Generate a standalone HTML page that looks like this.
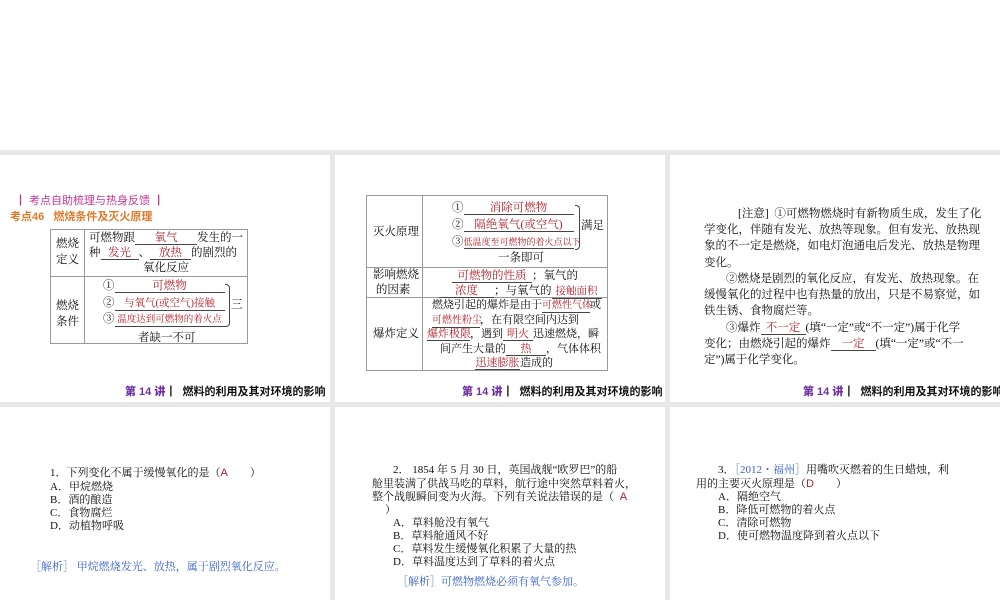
<!DOCTYPE html>
<html><head><meta charset="utf-8">
<style>
*{margin:0;padding:0;box-sizing:border-box}
body{width:1000px;height:600px;background:#e8e8e8;position:relative;overflow:hidden;font-family:"Liberation Serif","Noto Serif CJK SC",serif;color:#111}
.p{position:absolute;background:#fff;overflow:hidden}
.t{position:absolute;white-space:nowrap;font-size:11.5px;line-height:14px}
.r{color:#b0222a}
.u{display:inline-block;border-bottom:1px solid #444;text-align:center;line-height:12px}
.s{font-family:"Liberation Sans","Noto Sans CJK SC",sans-serif}
.foot{position:absolute;font-size:11px;white-space:nowrap;font-family:"Liberation Sans","Noto Sans CJK SC",sans-serif;font-weight:bold}
.foot b{color:#7030a0}
.bl{position:absolute;background:#999}
.blue{color:#3a62c8}
</style></head><body>
<div class="p" style="left:0;top:0;width:1000px;height:150px"></div>

<!-- Panel 1 -->
<div class="p" style="left:0;top:155px;width:330px;height:247px">
 <div class="t s" style="left:15px;top:39px;color:#c0359a;font-size:11px">┃ 考点自助梳理与热身反馈 ┃</div>
 <div class="t s" style="left:10px;top:55px;color:#e07a2a;font-size:11px;font-weight:bold">考点46 &nbsp; 燃烧条件及灭火原理</div>
 <div style="position:absolute;left:50px;top:74px;width:198px;height:115px;border:1px solid #999"></div>
 <div class="bl" style="left:84px;top:74px;width:1px;height:115px"></div>
 <div class="bl" style="left:50px;top:121px;width:198px;height:1px"></div>
 <div class="t" style="left:56px;top:81px;line-height:16px">燃烧<br>定义</div>
 <div class="t" style="left:89px;top:76px">可燃物跟<span class="u r" style="width:62px">氧气</span>发生的一</div>
 <div class="t" style="left:89px;top:91px">种<span class="u r" style="width:38px">发光</span>、<span class="u r" style="width:41px">放热</span>的剧烈的</div>
 <div class="t" style="left:143px;top:106px">氧化反应</div>
 <div class="t" style="left:56px;top:143px;line-height:16px">燃烧<br>条件</div>
 <div class="t" style="left:103px;top:124px">①<span class="u r" style="width:110px">可燃物</span></div>
 <div class="t" style="left:103px;top:141px">②<span class="u r" style="width:110px;font-size:10.5px">与氧气(或空气)接触</span></div>
 <div class="t" style="left:103px;top:157px">③<span class="u r" style="width:110px;font-size:9.5px">温度达到可燃物的着火点</span></div>
 <div style="position:absolute;left:225px;top:129px;width:5px;height:43px;border:1px solid #444;border-left:none;border-radius:0 4px 4px 0"></div>
 <div class="t" style="left:231px;top:143px">三</div>
 <div class="t" style="left:138px;top:176px">者缺一不可</div>
 <div class="foot" style="left:125px;top:228px"><b>第 14 讲</b>┃ &nbsp;燃料的利用及其对环境的影响</div>
</div>

<!-- Panel 2 -->
<div class="p" style="left:335px;top:155px;width:330px;height:247px">
 <div style="position:absolute;left:31px;top:40px;width:242px;height:176px;border:1px solid #999"></div>
 <div class="bl" style="left:87px;top:40px;width:1px;height:176px"></div>
 <div class="bl" style="left:31px;top:112px;width:242px;height:1px"></div>
 <div class="bl" style="left:31px;top:142px;width:242px;height:1px"></div>
 <div class="t" style="left:38px;top:70px">灭火原理</div>
 <div class="t" style="left:117px;top:46px">①<span class="u r" style="width:110px">消除可燃物</span></div>
 <div class="t" style="left:117px;top:63px">②<span class="u r" style="width:110px">隔绝氧气(或空气)</span></div>
 <div class="t" style="left:117px;top:80px">③<span class="u r" style="width:110px;font-size:9px">低温度至可燃物的着火点以下</span></div>
 <div style="position:absolute;left:240px;top:50px;width:5px;height:45px;border:1px solid #444;border-left:none;border-radius:0 4px 4px 0"></div>
 <div class="t" style="left:246px;top:64px">满足</div>
 <div class="t" style="left:163px;top:96px">一条即可</div>
 <div class="t" style="left:38px;top:113px;line-height:15px">影响燃烧<br>&nbsp;的因素</div>
 <div class="t" style="left:117px;top:114px"><span class="u r" style="width:80px">可燃物的性质</span>；氧气的</div>
 <div class="t" style="left:104px;top:129px"><span class="u r" style="width:55px">浓度</span>；与氧气的<span class="u r" style="width:50px;font-size:10.5px">接触面积</span></div>
 <div class="t" style="left:38px;top:172px">爆炸定义</div>
 <div class="t" style="left:97px;top:143px;font-size:11px">燃烧引起的爆炸是由于<span class="u r" style="width:48px;font-size:10px">可燃性气体</span>或</div>
 <div class="t" style="left:97px;top:158px;font-size:11px"><span class="u r" style="width:48px;font-size:10px">可燃性粉尘</span>，在有限空间内达到</div>
 <div class="t" style="left:92px;top:172px;font-size:11px"><span class="u r" style="width:43px">爆炸极限</span>，遇到<span class="u r" style="width:30px">明火</span>迅速燃烧，瞬</div>
 <div class="t" style="left:105px;top:187px;font-size:11px">间产生大量的<span class="u r" style="width:40px">热</span>，气体体积</div>
 <div class="t" style="left:140px;top:201px;font-size:11px"><span class="u r" style="width:45px">迅速膨胀</span>造成的</div>
 <div class="foot" style="left:127px;top:228px"><b>第 14 讲</b>┃ &nbsp;燃料的利用及其对环境的影响</div>
</div>

<!-- Panel 3 -->
<div class="p" style="left:670px;top:155px;width:330px;height:247px">
 <div class="t" style="left:68px;top:52px">[注意] &nbsp;①可燃物燃烧时有新物质生成，发生了化</div>
 <div class="t" style="left:34px;top:68px">学变化，伴随有发光、放热等现象。但有发光、放热现</div>
 <div class="t" style="left:34px;top:84px">象的不一定是燃烧，如电灯泡通电后发光、放热是物理</div>
 <div class="t" style="left:34px;top:101px">变化。</div>
 <div class="t" style="left:56px;top:117px">②燃烧是剧烈的氧化反应，有发光、放热现象。在</div>
 <div class="t" style="left:34px;top:133px">缓慢氧化的过程中也有热量的放出，只是不易察觉，如</div>
 <div class="t" style="left:34px;top:149px">铁生锈、食物腐烂等。</div>
 <div class="t" style="left:56px;top:166px">③爆炸<span class="u r" style="width:45px">不一定</span>(填“一定”或“不一定”)属于化学</div>
 <div class="t" style="left:34px;top:182px">变化；由燃烧引起的爆炸<span class="u r" style="width:45px">一定</span>(填“一定”或“不一</div>
 <div class="t" style="left:34px;top:198px">定”)属于化学变化。</div>
 <div class="foot" style="left:133px;top:228px"><b>第 14 讲</b>┃ &nbsp;燃料的利用及其对环境的影响</div>
</div>

<!-- Row 2 -->
<div class="p" style="left:0;top:407px;width:330px;height:193px">
 <div class="t" style="left:50px;top:59px;font-size:11px">1．下列变化不属于缓慢氧化的是（<span class="r s">A</span>　　）</div>
 <div class="t" style="left:50px;top:73px;font-size:11px">A．甲烷燃烧</div>
 <div class="t" style="left:50px;top:86px;font-size:11px">B．酒的酿造</div>
 <div class="t" style="left:50px;top:99px;font-size:11px">C．食物腐烂</div>
 <div class="t" style="left:50px;top:112px;font-size:11px">D．动植物呼吸</div>
 <div class="t blue" style="left:30px;top:153px;font-size:11px">［解析］ 甲烷燃烧发光、放热，属于剧烈氧化反应。</div>
</div>
<div class="p" style="left:335px;top:407px;width:330px;height:193px">
 <div class="t" style="left:58px;top:56px;font-size:11px">2． 1854 年 5 月 30 日，英国战舰“欧罗巴”的船</div>
 <div class="t" style="left:37px;top:70px;font-size:11px">舱里装满了供战马吃的草料，航行途中突然草料着火，</div>
 <div class="t" style="left:37px;top:83px;font-size:11px">整个战舰瞬间变为火海。下列有关说法错误的是（ <span class="r s">&nbsp;A</span></div>
 <div class="t" style="left:50px;top:96px;font-size:11px">）</div>
 <div class="t" style="left:58px;top:109px;font-size:11px">A．草料舱没有氧气</div>
 <div class="t" style="left:58px;top:122px;font-size:11px">B．草料舱通风不好</div>
 <div class="t" style="left:58px;top:135px;font-size:11px">C．草料发生缓慢氧化积累了大量的热</div>
 <div class="t" style="left:58px;top:148px;font-size:11px">D．草料温度达到了草料的着火点</div>
 <div class="t blue" style="left:62px;top:168px;font-size:11px">［解析］可燃物燃烧必须有氧气参加。</div>
</div>
<div class="p" style="left:670px;top:407px;width:330px;height:193px">
 <div class="t" style="left:48px;top:56px;font-size:11px">3．<span class="blue">［2012・福州］</span>用嘴吹灭燃着的生日蜡烛，利</div>
 <div class="t" style="left:26px;top:70px;font-size:11px">用的主要灭火原理是（<span class="r s">D</span>　　）</div>
 <div class="t" style="left:48px;top:83px;font-size:11px">A．隔绝空气</div>
 <div class="t" style="left:48px;top:96px;font-size:11px">B．降低可燃物的着火点</div>
 <div class="t" style="left:48px;top:109px;font-size:11px">C．清除可燃物</div>
 <div class="t" style="left:48px;top:122px;font-size:11px">D．使可燃物温度降到着火点以下</div>
</div>
</body></html>
